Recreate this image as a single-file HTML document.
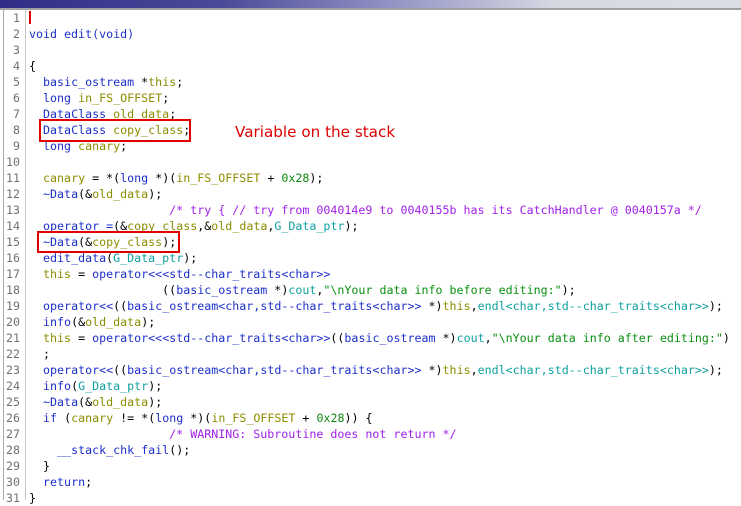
<!DOCTYPE html>
<html><head><meta charset="utf-8"><style>
body{margin:0;width:741px;height:500px;overflow:hidden;background:#fff;position:relative;font-family:"DejaVu Sans Mono",monospace;}
#tb{position:absolute;left:0;top:0;width:741px;height:8px;background:linear-gradient(90deg,#2e2e86 0%,#4a4a9a 30%,#9a9ac8 55%,#d6d9e2 75%,#dcdfe6 100%);}
#tl{position:absolute;left:0;top:8px;width:741px;height:2px;background:#a0a0a0;}
#lb{position:absolute;left:3px;top:10px;width:1px;height:490px;background:#a8a8a8;}
#gb{position:absolute;left:25px;top:10px;width:1px;height:490px;background:#c8c8c8;}
#w{position:absolute;left:0;top:1px;width:741px;height:500px;}
.n{position:absolute;left:4px;width:16px;text-align:right;color:#707070;font-size:11.6px;line-height:16px;}
.c{position:absolute;left:29px;white-space:pre;color:#000;font-size:11.65px;line-height:16px;}
.k{color:#1c30c8}.v{color:#8c8c00}.s{color:#0a9010}.t{color:#10a0a0}.m{color:#a020e8}.g{color:#108a10}
.box{position:absolute;border:2px solid #e00000;box-sizing:border-box;}
</style></head><body>
<div id="tb"></div><div id="tl"></div><div id="lb"></div><div id="gb"></div>
<div style="position:absolute;left:29px;top:11px;width:2px;height:13px;background:#e00000"></div>
<div id="w">
<div class="n" style="top:9px">1</div><div class="n" style="top:25px">2</div><div class="n" style="top:41px">3</div><div class="n" style="top:57px">4</div><div class="n" style="top:73px">5</div><div class="n" style="top:89px">6</div><div class="n" style="top:105px">7</div><div class="n" style="top:121px">8</div><div class="n" style="top:137px">9</div><div class="n" style="top:153px">10</div><div class="n" style="top:169px">11</div><div class="n" style="top:185px">12</div><div class="n" style="top:201px">13</div><div class="n" style="top:217px">14</div><div class="n" style="top:233px">15</div><div class="n" style="top:249px">16</div><div class="n" style="top:265px">17</div><div class="n" style="top:281px">18</div><div class="n" style="top:297px">19</div><div class="n" style="top:313px">20</div><div class="n" style="top:329px">21</div><div class="n" style="top:345px">22</div><div class="n" style="top:361px">23</div><div class="n" style="top:377px">24</div><div class="n" style="top:393px">25</div><div class="n" style="top:409px">26</div><div class="n" style="top:425px">27</div><div class="n" style="top:441px">28</div><div class="n" style="top:457px">29</div><div class="n" style="top:473px">30</div><div class="n" style="top:489px">31</div>
<div class="c" style="top:25px"><span class="k">void edit(void)</span></div>
<div class="c" style="top:57px">{</div>
<div class="c" style="top:73px">  <span class="k">basic_ostream</span> *<span class="v">this</span>;</div>
<div class="c" style="top:89px">  <span class="k">long</span> <span class="v">in_FS_OFFSET</span>;</div>
<div class="c" style="top:105px">  <span class="k">DataClass</span> <span class="v">old_data</span>;</div>
<div class="c" style="top:121px">  <span class="k">DataClass</span> <span class="v">copy_class</span>;</div>
<div class="c" style="top:137px">  <span class="k">long</span> <span class="v">canary</span>;</div>
<div class="c" style="top:169px">  <span class="v">canary</span> = *(<span class="k">long</span> *)(<span class="v">in_FS_OFFSET</span> + <span class="g">0x28</span>);</div>
<div class="c" style="top:185px">  <span class="k">~Data</span>(&amp;<span class="v">old_data</span>);</div>
<div class="c" style="top:201px">                    <span class="m">/* try { // try from 004014e9 to 0040155b has its CatchHandler @ 0040157a */</span></div>
<div class="c" style="top:217px">  <span class="k">operator_=</span>(&amp;<span class="v">copy_class</span>,&amp;<span class="v">old_data</span>,<span class="t">G_Data_ptr</span>);</div>
<div class="c" style="top:233px">  <span class="k">~Data</span>(&amp;<span class="v">copy_class</span>);</div>
<div class="c" style="top:249px">  <span class="k">edit_data</span>(<span class="t">G_Data_ptr</span>);</div>
<div class="c" style="top:265px">  <span class="v">this</span> = <span class="k">operator&lt;&lt;&lt;std--char_traits&lt;char&gt;&gt;</span></div>
<div class="c" style="top:281px">                   ((<span class="k">basic_ostream</span> *)<span class="t">cout</span>,<span class="s">"\nYour data info before editing:"</span>);</div>
<div class="c" style="top:297px">  <span class="k">operator&lt;&lt;</span>((<span class="k">basic_ostream&lt;char,std--char_traits&lt;char&gt;&gt;</span> *)<span class="v">this</span>,<span class="t">endl&lt;char,std--char_traits&lt;char&gt;&gt;</span>);</div>
<div class="c" style="top:313px">  <span class="k">info</span>(&amp;<span class="v">old_data</span>);</div>
<div class="c" style="top:329px">  <span class="v">this</span> = <span class="k">operator&lt;&lt;&lt;std--char_traits&lt;char&gt;&gt;</span>((<span class="k">basic_ostream</span> *)<span class="t">cout</span>,<span class="s">"\nYour data info after editing:"</span>)</div>
<div class="c" style="top:345px">  ;</div>
<div class="c" style="top:361px">  <span class="k">operator&lt;&lt;</span>((<span class="k">basic_ostream&lt;char,std--char_traits&lt;char&gt;&gt;</span> *)<span class="v">this</span>,<span class="t">endl&lt;char,std--char_traits&lt;char&gt;&gt;</span>);</div>
<div class="c" style="top:377px">  <span class="k">info</span>(<span class="t">G_Data_ptr</span>);</div>
<div class="c" style="top:393px">  <span class="k">~Data</span>(&amp;<span class="v">old_data</span>);</div>
<div class="c" style="top:409px">  <span class="k">if</span> (<span class="v">canary</span> != *(<span class="k">long</span> *)(<span class="v">in_FS_OFFSET</span> + <span class="g">0x28</span>)) {</div>
<div class="c" style="top:425px">                    <span class="m">/* WARNING: Subroutine does not return */</span></div>
<div class="c" style="top:441px">    <span class="k">__stack_chk_fail</span>();</div>
<div class="c" style="top:457px">  }</div>
<div class="c" style="top:473px">  <span class="k">return</span>;</div>
<div class="c" style="top:489px">}</div>
</div>
<div class="box" style="left:39px;top:119px;width:152px;height:23px"></div>
<div class="box" style="left:37px;top:231px;width:143px;height:22px"></div>
<div style="position:absolute;left:235px;top:123px;color:#e00000;font-family:'DejaVu Sans',sans-serif;font-size:15.2px;white-space:nowrap">Variable on the stack</div>
</body></html>
